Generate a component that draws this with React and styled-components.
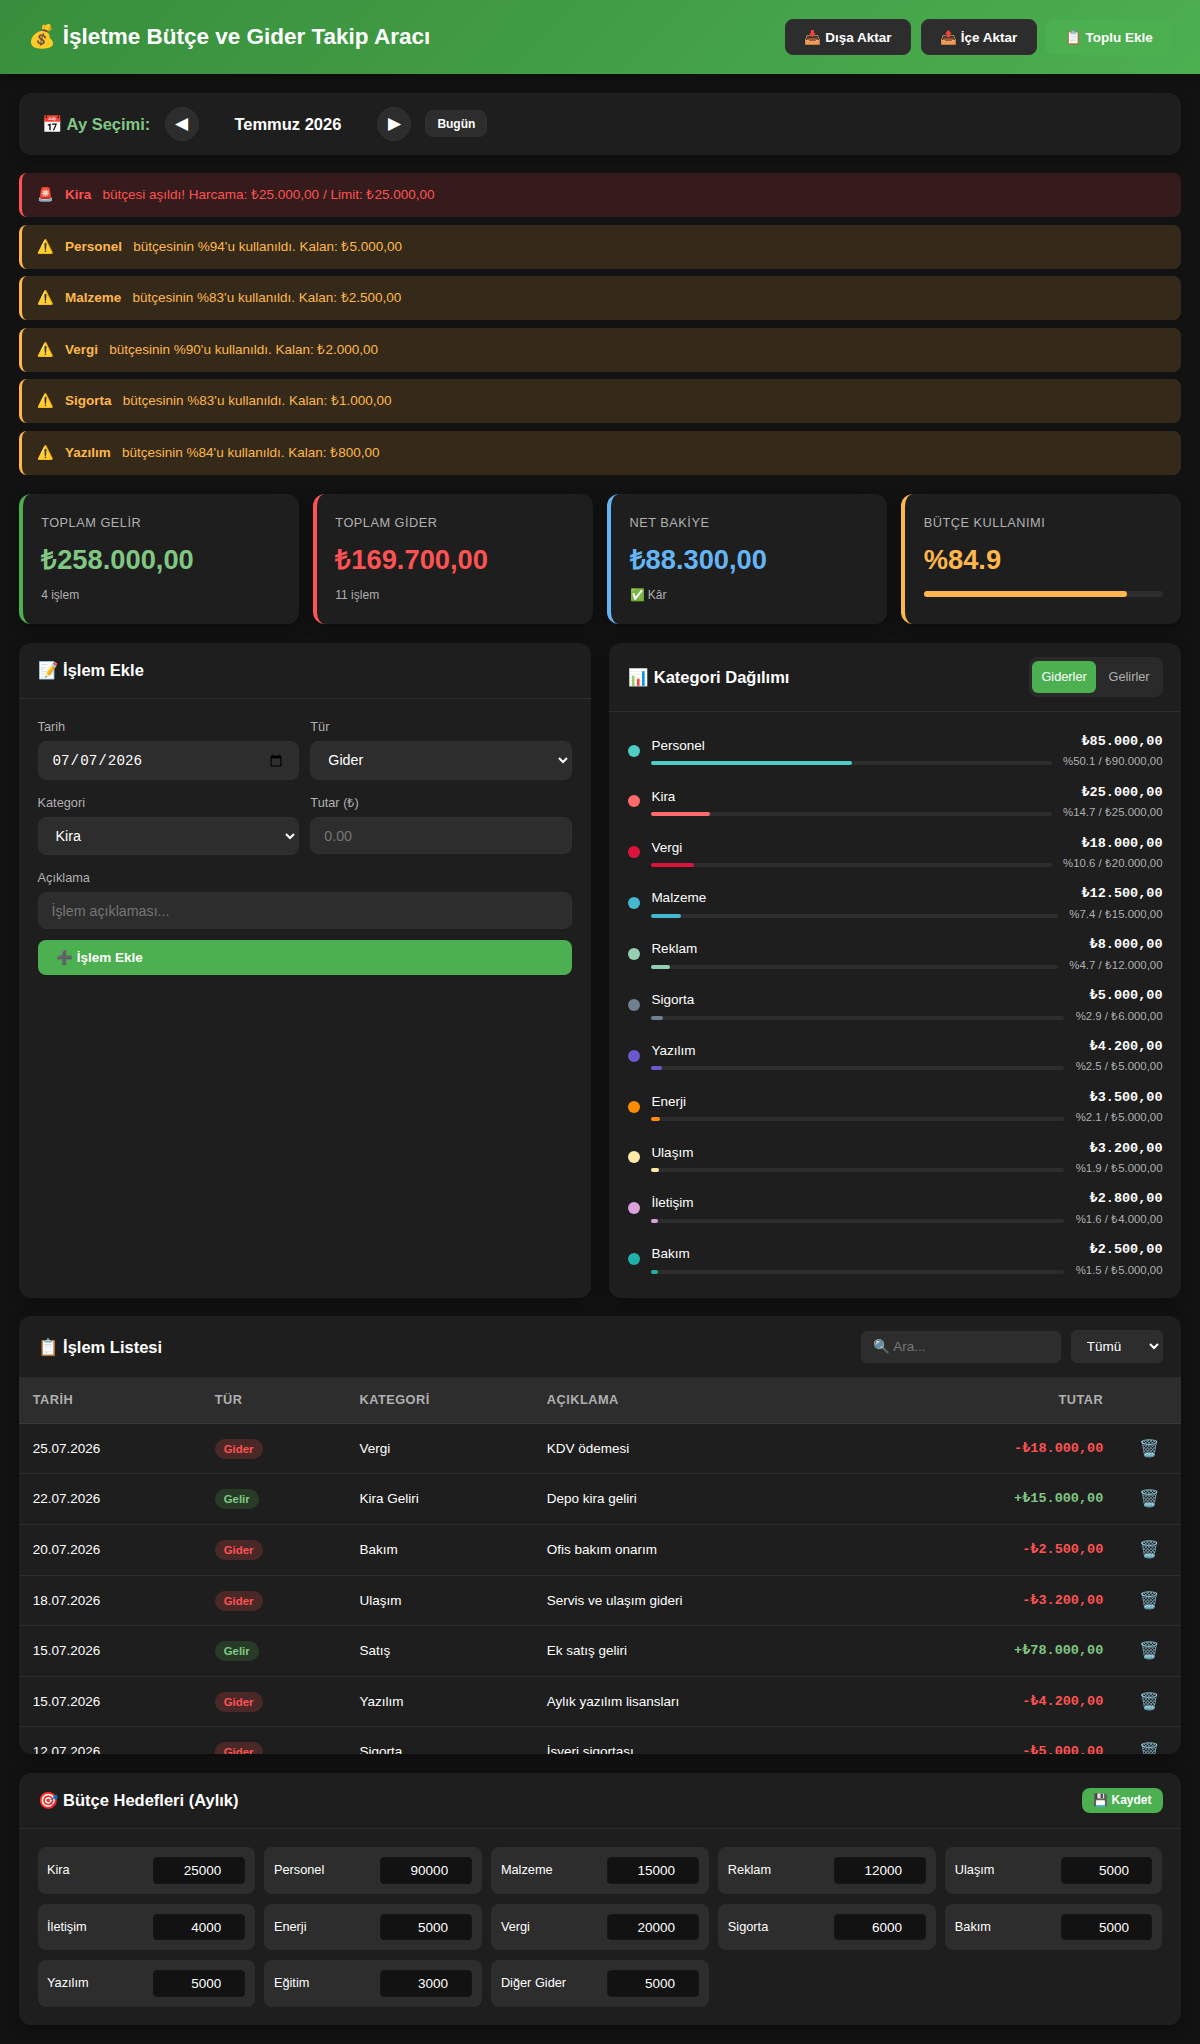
import React from "react";
import styled, { createGlobalStyle } from "styled-components";

const GlobalStyle = createGlobalStyle`
  * { box-sizing: border-box; margin: 0; padding: 0; }
  body {
    background: #121212;
    color: #fff;
    font-family: "Liberation Sans", Arial, sans-serif;
    font-size: 15px;
    line-height: 1.6;
  }
`;

const Header = styled.header`
  display: flex;
  align-items: center;
  justify-content: space-between;
  height: 74px;
  padding: 0 28.8px 0 28.4px;
  background: linear-gradient(135deg, #388e3c, #4caf50);
  box-shadow: 0 2px 10px rgba(0, 0, 0, 0.3);
`;

const Title = styled.h1`
  font-size: 22.5px;
  font-weight: 600;
  line-height: 36px;
  margin-top: -1px;
`;

const Actions = styled.div`
  display: flex;
  align-items: center;
  gap: 9.75px;
`;

const Button = styled.button`
  display: inline-flex;
  align-items: center;
  height: ${(p) => (p.$small ? "25px" : p.$outlined ? "36px" : "35px")};
  padding: ${(p) => (p.$small ? "0 11px" : "0 18.4px")};
  font: 600 ${(p) => (p.$small ? "12px" : "13.5px")} "Liberation Sans", Arial, sans-serif;
  color: #fff;
  background: ${(p) => (p.$outlined ? "#2d2d2d" : "#4caf50")};
  border: ${(p) => (p.$outlined ? "1px solid #303030" : "0")};
  border-radius: 8px;
`;

const Main = styled.main`
  display: flex;
  flex-direction: column;
  gap: 18.75px;
  padding: 18.75px 18.75px 18px;
`;

const MonthBar = styled.section`
  display: flex;
  align-items: center;
  gap: 14.25px;
  height: 61.9px;
  padding: 0 22.9px;
  background: #1e1e1e;
  border-radius: 12px;
  box-shadow: 0 4px 15px rgba(0, 0, 0, 0.3);
`;

const MonthLabel = styled.span`
  font-size: 16.5px;
  font-weight: 600;
  color: #81c784;
`;

const RoundButton = styled.button`
  width: 34px;
  height: 34px;
  border: 1px solid #303030;
  border-radius: 50%;
  background: #2d2d2d;
  color: #fff;
  font: 16.5px "Liberation Sans", Arial, sans-serif;
`;

const MonthName = styled.span`
  width: 150px;
  text-align: center;
  font-size: 16.5px;
  font-weight: 600;
`;

const TodayButton = styled(Button)`
  height: 27.6px;
  background: #2d2d2d;
  border: 1px solid #303030;
`;

const Alerts = styled.section`
  display: flex;
  flex-direction: column;
  gap: 7.5px;
`;

const Alert = styled.div`
  display: flex;
  align-items: center;
  gap: 11.25px;
  height: 44px;
  padding: 0 15px 1px;
  font-size: 13.5px;
  color: ${(p) => (p.$danger ? "#ff5252" : "#ffb74d")};
  background: ${(p) => (p.$danger ? "rgba(255,82,82,0.15)" : "rgba(255,183,77,0.15)")};
  border-left: 3px solid ${(p) => (p.$danger ? "#ff5252" : "#ffb74d")};
  border-radius: 8px;
`;

const Stats = styled.section`
  display: grid;
  grid-template-columns: repeat(4, 1fr);
  gap: 14.25px;
`;

const Stat = styled.div`
  height: 130.4px;
  padding: 19.6px 18.4px 0;
  background: #1e1e1e;
  border-left: 4px solid ${(p) => p.$edge};
  border-radius: 12px;
  box-shadow: 0 4px 15px rgba(0, 0, 0, 0.3);
`;

const StatLabel = styled.div`
  font-size: 12.75px;
  letter-spacing: 0.5px;
  color: #b0b0b0;
  margin-bottom: 4.5px;
`;

const StatValue = styled.div`
  font-size: 27.3px;
  line-height: 43.2px;
  font-weight: 700;
  color: ${(p) => p.$color};
`;

const StatNote = styled.div`
  margin-top: 5px;
  font-size: 12px;
  color: #b0b0b0;
`;

const UsageTrack = styled.div`
  height: 6px;
  margin-top: 9.5px;
  border-radius: 3px;
  background: #2d2d2d;
`;

const UsageFill = styled.div`
  width: 84.9%;
  height: 100%;
  border-radius: 3px;
  background: #ffb74d;
`;

const Columns = styled.div`
  display: grid;
  grid-template-columns: 1fr 1fr;
  gap: 18.75px;
`;

const Panel = styled.section`
  height: ${(p) => p.$height}px;
  background: #1e1e1e;
  border-radius: 12px;
  box-shadow: 0 4px 15px rgba(0, 0, 0, 0.3);
  overflow: hidden;
`;

const PanelHeader = styled.div`
  display: flex;
  align-items: center;
  justify-content: space-between;
  padding: 0 18.75px;
  height: ${(p) => p.$height || 56}px;
  border-bottom: 1px solid #2d2d2d;
`;

const PanelTitle = styled.h2`
  font-size: 16.5px;
  font-weight: 600;
`;

const Form = styled.div`
  display: grid;
  grid-template-columns: 1fr 1fr;
  grid-template-rows: 64.6px 63.9px 60.9px auto;
  gap: 11.25px;
  padding: 18.3px 18.75px;
  align-items: start;
`;

const Field = styled.label`
  display: flex;
  flex-direction: column;
  gap: 3.75px;
  grid-column: ${(p) => (p.$wide ? "1 / -1" : "auto")};
  font-size: 12.75px;
  color: #b0b0b0;
`;

const control = `
  width: 100%;
  padding: 9px 13px;
  color: #fff;
  background: #2d2d2d;
  border: 1px solid #303030;
  border-radius: 8px;
  font-size: 14.25px;
`;

const Input = styled.input`
  ${control}
  height: ${(p) => (p.type === "date" ? "39px" : "37px")};
  font-family: ${(p) => (p.type === "date" ? '"Liberation Mono", monospace' : '"Liberation Sans", Arial, sans-serif')};
`;

const Select = styled.select`
  ${control}
  height: 38.4px;
  font-family: "Liberation Sans", Arial, sans-serif;
`;

const SubmitButton = styled(Button)`
  grid-column: 1 / -1;
  width: 100%;
  padding-bottom: 1px;
`;

const Toggle = styled.div`
  display: flex;
  gap: 3.75px;
  height: 40.5px;
  padding: 3.9px;
  background: #2a2a2a;
  border-radius: 8px;
`;

const ToggleOption = styled.button`
  padding: 0 9px;
  border: 0;
  border-radius: 6px;
  font: 12.75px "Liberation Sans", Arial, sans-serif;
  color: ${(p) => (p.$active ? "#fff" : "#b0b0b0")};
  background: ${(p) => (p.$active ? "#4caf50" : "transparent")};
`;

const CategoryList = styled.ul`
  display: flex;
  flex-direction: column;
  gap: 11.25px;
  padding: 18.75px;
  list-style: none;
`;

const Category = styled.li`
  display: flex;
  align-items: center;
  gap: 11.25px;
  height: 39.6px;
`;

const Dot = styled.span`
  width: 12px;
  height: 12px;
  flex: none;
  border-radius: 50%;
  background: ${(p) => p.$color};
`;

const CategoryInfo = styled.div`
  flex: 1;
  font-size: 13.5px;
  line-height: 20.4px;
`;

const CategoryTrack = styled.div`
  height: 4px;
  margin-top: 5.2px;
  border-radius: 2px;
  background: #2d2d2d;
`;

const CategoryFill = styled.div`
  height: 100%;
  border-radius: 2px;
  background: ${(p) => p.$color};
`;

const CategoryNumbers = styled.div`
  text-align: right;
`;

const Amount = styled.div`
  font: 600 13.5px/21.6px "Liberation Mono", monospace;
`;

const Share = styled.div`
  font-size: 11.4px;
  line-height: 18px;
  color: #b0b0b0;
`;

const Filters = styled.div`
  display: flex;
  align-items: center;
  gap: 9.4px;
`;

const Search = styled(Input)`
  width: 200px;
  height: 32px;
  padding: 0 11.25px;
  font-size: 13.5px;
  border-radius: 6px;
`;

const TypeFilter = styled(Select)`
  width: 92px;
  height: 33px;
  padding: 0 11.25px;
  font-size: 13.5px;
  border-radius: 6px;
`;

const Table = styled.table`
  width: 100%;
  table-layout: fixed;
  border-collapse: collapse;
`;

const Th = styled.th`
  height: 45px;
  width: ${(p) => (p.$width ? p.$width + "px" : "auto")};
  padding: 0 14px;
  text-align: ${(p) => p.$align || "left"};
  font-size: 12.75px;
  font-weight: 600;
  letter-spacing: 0.5px;
  color: #b0b0b0;
  background: #2d2d2d;
  border-bottom: 1px solid #383838;
`;

const Td = styled.td`
  height: 50.6px;
  padding: 0 14px;
  font-size: 13.5px;
  text-align: ${(p) => p.$align || "left"};
  border-bottom: 1px solid #2d2d2d;
`;

const TdAmount = styled(Td)`
  font-family: "Liberation Mono", monospace;
  font-weight: 600;
  text-align: right;
  color: ${(p) => (p.$income ? "#81c784" : "#ff5252")};
`;

const Badge = styled.span`
  display: inline-block;
  padding: 1px 9px;
  border-radius: 12px;
  font-size: 11.4px;
  line-height: 18px;
  font-weight: 600;
  color: ${(p) => (p.$income ? "#81c784" : "#ff5252")};
  background: ${(p) => (p.$income ? "rgba(76,175,80,0.2)" : "rgba(255,82,82,0.2)")};
`;

const DeleteButton = styled.button`
  padding-top: 2px;
  border: 0;
  background: none;
  font: 16.5px "Liberation Sans", Arial, sans-serif;
  color: #fff;
`;

const Goals = styled.div`
  display: grid;
  grid-template-columns: repeat(5, 1fr);
  gap: 9.75px;
  padding: 18.4px 18.75px;
`;

const Goal = styled.label`
  display: flex;
  align-items: center;
  justify-content: space-between;
  height: 46.75px;
  padding: 0 10px 0 9.5px;
  font-size: 12.75px;
  background: #2d2d2d;
  border-radius: 8px;
`;

const GoalInput = styled.input`
  width: 91.5px;
  height: 26.4px;
  padding: 0 7.5px;
  text-align: right;
  color: #fff;
  background: #121212;
  border: 1px solid #161616;
  border-radius: 4px;
  font: 13.5px "Liberation Sans", Arial, sans-serif;
`;

const alerts = [
  ["Kira", "bütçesi aşıldı! Harcama: ₺25.000,00 / Limit: ₺25.000,00", true],
  ["Personel", "bütçesinin %94'u kullanıldı. Kalan: ₺5.000,00"],
  ["Malzeme", "bütçesinin %83'u kullanıldı. Kalan: ₺2.500,00"],
  ["Vergi", "bütçesinin %90'u kullanıldı. Kalan: ₺2.000,00"],
  ["Sigorta", "bütçesinin %83'u kullanıldı. Kalan: ₺1.000,00"],
  ["Yazılım", "bütçesinin %84'u kullanıldı. Kalan: ₺800,00"],
];

const categories = [
  ["Personel", "85.000,00", "50.1", "90.000,00", "#4ecdc4"],
  ["Kira", "25.000,00", "14.7", "25.000,00", "#ff6b6b"],
  ["Vergi", "18.000,00", "10.6", "20.000,00", "#dc143c"],
  ["Malzeme", "12.500,00", "7.4", "15.000,00", "#45b7d1"],
  ["Reklam", "8.000,00", "4.7", "12.000,00", "#96ceb4"],
  ["Sigorta", "5.000,00", "2.9", "6.000,00", "#708090"],
  ["Yazılım", "4.200,00", "2.5", "5.000,00", "#6a5acd"],
  ["Enerji", "3.500,00", "2.1", "5.000,00", "#ff8c00"],
  ["Ulaşım", "3.200,00", "1.9", "5.000,00", "#ffeaa7"],
  ["İletişim", "2.800,00", "1.6", "4.000,00", "#dda0dd"],
  ["Bakım", "2.500,00", "1.5", "5.000,00", "#20b2aa"],
];

const rows = [
  ["25.07.2026", false, "Vergi", "KDV ödemesi", "18.000,00"],
  ["22.07.2026", true, "Kira Geliri", "Depo kira geliri", "15.000,00"],
  ["20.07.2026", false, "Bakım", "Ofis bakım onarım", "2.500,00"],
  ["18.07.2026", false, "Ulaşım", "Servis ve ulaşım gideri", "3.200,00"],
  ["15.07.2026", true, "Satış", "Ek satış geliri", "78.000,00"],
  ["15.07.2026", false, "Yazılım", "Aylık yazılım lisansları", "4.200,00"],
  ["12.07.2026", false, "Sigorta", "İşveri sigortası", "5.000,00"],
];

const goals = [
  ["Kira", 25000], ["Personel", 90000], ["Malzeme", 15000], ["Reklam", 12000], ["Ulaşım", 5000],
  ["İletişim", 4000], ["Enerji", 5000], ["Vergi", 20000], ["Sigorta", 6000], ["Bakım", 5000],
  ["Yazılım", 5000], ["Eğitim", 3000], ["Diğer Gider", 5000],
];

export default function App() {
  return (
    <>
      <GlobalStyle />
      <Header>
        <Title>💰 İşletme Bütçe ve Gider Takip Aracı</Title>
        <Actions>
          <Button $outlined>📥 Dışa Aktar</Button>
          <Button $outlined>📤 İçe Aktar</Button>
          <Button>📋 Toplu Ekle</Button>
        </Actions>
      </Header>
      <Main>
        <MonthBar>
          <MonthLabel>📅 Ay Seçimi:</MonthLabel>
          <RoundButton>◀</RoundButton>
          <MonthName>Temmuz 2026</MonthName>
          <RoundButton>▶</RoundButton>
          <TodayButton $small>Bugün</TodayButton>
        </MonthBar>

        <Alerts>
          {alerts.map(([name, text, danger]) => (
            <Alert key={name} $danger={danger}>
              <span>{danger ? "🚨" : "⚠️"}</span>
              <strong>{name}</strong>
              <span>{text}</span>
            </Alert>
          ))}
        </Alerts>

        <Stats>
          <Stat $edge="#4caf50">
            <StatLabel>TOPLAM GELİR</StatLabel>
            <StatValue $color="#81c784">₺258.000,00</StatValue>
            <StatNote>4 işlem</StatNote>
          </Stat>
          <Stat $edge="#ff5252">
            <StatLabel>TOPLAM GİDER</StatLabel>
            <StatValue $color="#ff5252">₺169.700,00</StatValue>
            <StatNote>11 işlem</StatNote>
          </Stat>
          <Stat $edge="#64b5f6">
            <StatLabel>NET BAKİYE</StatLabel>
            <StatValue $color="#64b5f6">₺88.300,00</StatValue>
            <StatNote>✅ Kâr</StatNote>
          </Stat>
          <Stat $edge="#ffb74d">
            <StatLabel>BÜTÇE KULLANIMI</StatLabel>
            <StatValue $color="#ffb74d">%84.9</StatValue>
            <UsageTrack><UsageFill /></UsageTrack>
          </Stat>
        </Stats>

        <Columns>
          <Panel $height={654.8}>
            <PanelHeader><PanelTitle>📝 İşlem Ekle</PanelTitle></PanelHeader>
            <Form>
              <Field>Tarih<Input type="date" defaultValue="2026-07-07" /></Field>
              <Field>Tür<Select defaultValue="Gider"><option>Gider</option><option>Gelir</option></Select></Field>
              <Field>Kategori<Select defaultValue="Kira"><option>Kira</option></Select></Field>
              <Field>Tutar (₺)<Input type="number" placeholder="0.00" /></Field>
              <Field $wide>Açıklama<Input type="text" placeholder="İşlem açıklaması..." /></Field>
              <SubmitButton>➕ İşlem Ekle</SubmitButton>
            </Form>
          </Panel>

          <Panel $height={654.8}>
            <PanelHeader $height={69.3}>
              <PanelTitle>📊 Kategori Dağılımı</PanelTitle>
              <Toggle>
                <ToggleOption $active>Giderler</ToggleOption>
                <ToggleOption>Gelirler</ToggleOption>
              </Toggle>
            </PanelHeader>
            <CategoryList>
              {categories.map(([name, amount, pct, limit, color]) => (
                <Category key={name}>
                  <Dot $color={color} />
                  <CategoryInfo>
                    {name}
                    <CategoryTrack><CategoryFill $color={color} style={{ width: pct + "%" }} /></CategoryTrack>
                  </CategoryInfo>
                  <CategoryNumbers>
                    <Amount>₺{amount}</Amount>
                    <Share>%{pct} / ₺{limit}</Share>
                  </CategoryNumbers>
                </Category>
              ))}
            </CategoryList>
          </Panel>
        </Columns>

        <Panel $height={437.7}>
          <PanelHeader $height={62}>
            <PanelTitle>📋 İşlem Listesi</PanelTitle>
            <Filters>
              <Search type="text" placeholder="🔍 Ara..." />
              <TypeFilter defaultValue="Tümü"><option>Tümü</option></TypeFilter>
            </Filters>
          </PanelHeader>
          <Table>
            <thead>
              <tr>
                <Th $width={182}>TARİH</Th>
                <Th $width={144.7}>TÜR</Th>
                <Th $width={187.3}>KATEGORİ</Th>
                <Th>AÇIKLAMA</Th>
                <Th $width={200} $align="right">TUTAR</Th>
                <Th $width={64} />
              </tr>
            </thead>
            <tbody>
              {rows.map(([date, income, category, note, amount]) => (
                <tr key={date + category}>
                  <Td>{date}</Td>
                  <Td><Badge $income={income}>{income ? "Gelir" : "Gider"}</Badge></Td>
                  <Td>{category}</Td>
                  <Td>{note}</Td>
                  <TdAmount $income={income}>{income ? "+" : "-"}₺{amount}</TdAmount>
                  <Td $align="center"><DeleteButton>🗑️</DeleteButton></Td>
                </tr>
              ))}
            </tbody>
          </Table>
        </Panel>

        <Panel $height={252.4}>
          <PanelHeader>
            <PanelTitle>🎯 Bütçe Hedefleri (Aylık)</PanelTitle>
            <Button $small>💾 Kaydet</Button>
          </PanelHeader>
          <Goals>
            {goals.map(([name, value]) => (
              <Goal key={name}>
                {name}
                <GoalInput type="number" defaultValue={value} />
              </Goal>
            ))}
          </Goals>
        </Panel>
      </Main>
    </>
  );
}
